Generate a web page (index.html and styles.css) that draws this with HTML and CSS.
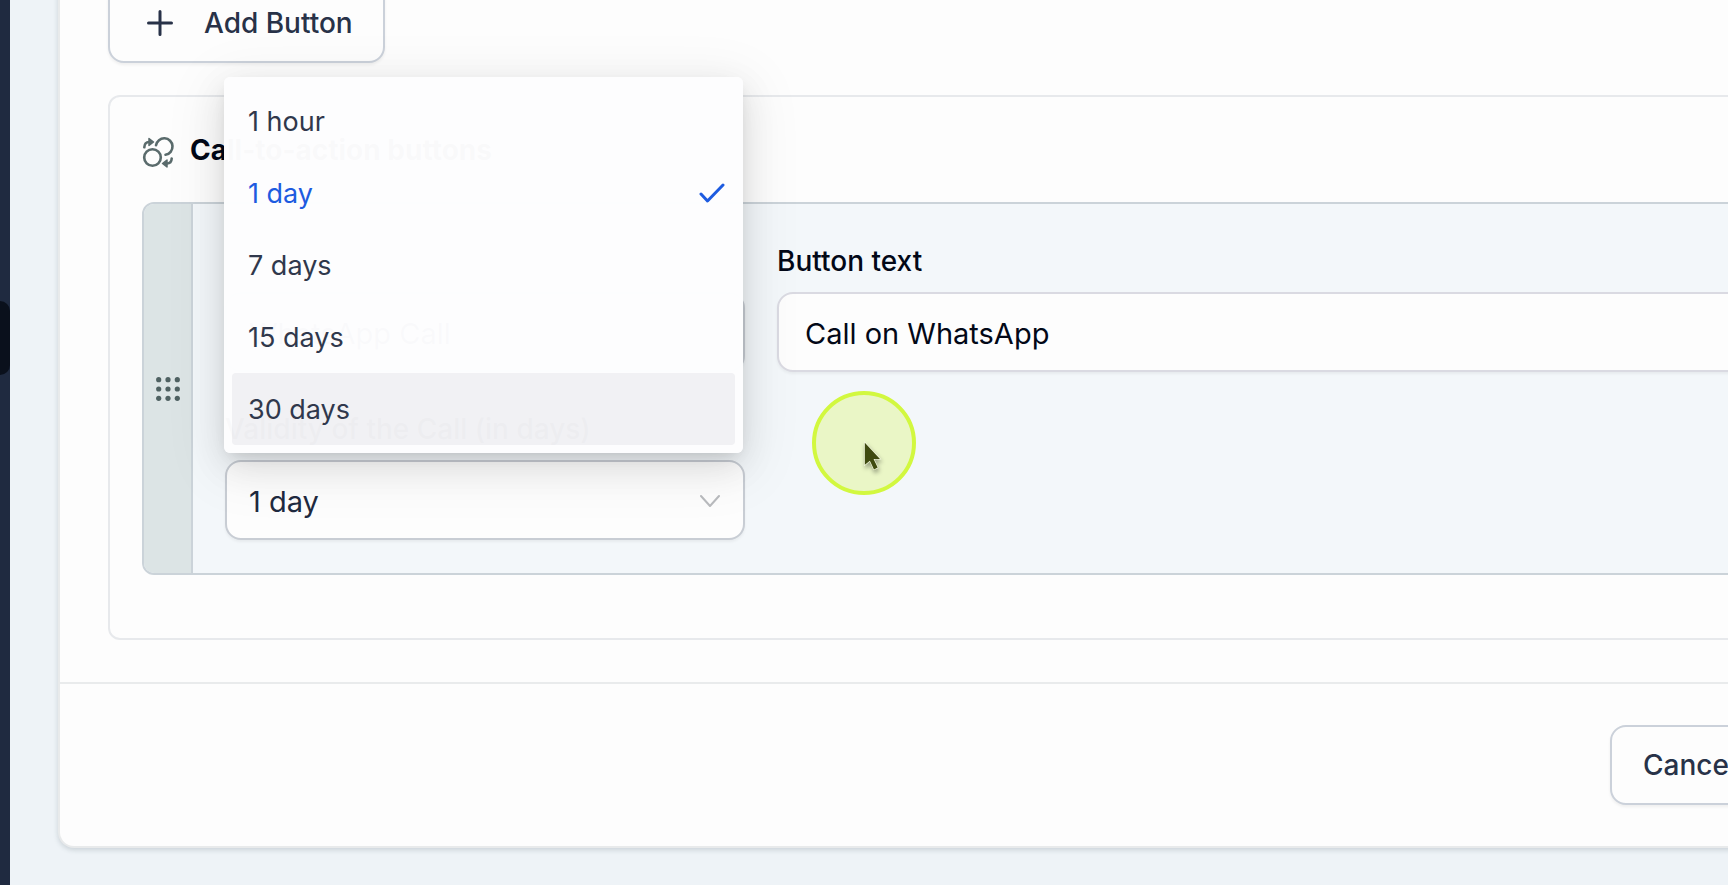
FILE: index.html
```html
<!DOCTYPE html>
<html lang="en">
<head>
    <meta charset="UTF-8">
    <meta name="viewport" content="width=device-width, initial-scale=1.0">
    <title>Call-to-action buttons</title>
    <link rel="stylesheet" href="styles.css">
</head>
<body>
    <aside class="sidebar">
        <div class="sidebar-handle"></div>
    </aside>

    <main class="content">
        <form class="card">
            <div class="card-body">
                <button type="button" class="btn add-btn">
                    <svg width="28" height="28" viewBox="0 0 28 28" fill="none" stroke="currentColor" stroke-width="3" stroke-linecap="round">
                        <path d="M14 2.5v23M2.5 14h23"/>
                    </svg>
                    Add Button
                </button>

                <section class="panel">
                    <h2 class="panel-title">
                        <svg width="32" height="32" viewBox="0 0 32 32" fill="none" stroke="#5a6b6c" stroke-width="2.6" stroke-linecap="round">
                            <circle cx="10.5" cy="21.5" r="8.3"/>
                            <path d="M14 9.3A8.3 8.3 0 1 1 23.5 18.8"/>
                            <path d="M2.3 11.3C2.5 8 4 6 7 6"/>
                            <path d="M29.7 22.5C29.5 26 28 27.5 25 27.5"/>
                            <path d="M7 2.5v7l4.500-3.500zM25 24v7l-4.500-3.500z" fill="#5a6b6c" stroke-width="1.5" stroke-linejoin="round"/>
                        </svg>
                        Call-to-action buttons
                    </h2>

                    <div class="action">
                        <div class="drag">
                            <svg width="24" height="24" viewBox="0 0 24 24" fill="#4f6162">
                                <circle cx="2.7" cy="2.7" r="2.6"/><circle cx="12" cy="2.7" r="2.6"/><circle cx="21.3" cy="2.7" r="2.6"/>
                                <circle cx="2.7" cy="12" r="2.6"/><circle cx="12" cy="12" r="2.6"/><circle cx="21.3" cy="12" r="2.6"/>
                                <circle cx="2.7" cy="21.3" r="2.6"/><circle cx="12" cy="21.3" r="2.6"/><circle cx="21.3" cy="21.3" r="2.6"/>
                            </svg>
                        </div>

                        <div class="fields">
                            <div class="field">
                                <select class="control" aria-label="Type of action">
                                    <option>WhatsApp Call</option>
                                </select>
                            </div>

                            <div class="field">
                                <label for="buttonText">Button text</label>
                                <input type="text" id="buttonText" class="control" value="Call on WhatsApp">
                            </div>

                            <div class="field">
                                <label for="validity">Validity of the Call (in days)</label>
                                <div class="select-wrap">
                                    <select id="validity" class="control">
                                        <option>1 hour</option>
                                        <option selected>1 day</option>
                                        <option>7 days</option>
                                        <option>15 days</option>
                                        <option>30 days</option>
                                    </select>
                                    <svg class="chevron" width="20" height="12" viewBox="0 0 20 12" fill="none" stroke="#b9bbbe" stroke-width="2" stroke-linecap="round" stroke-linejoin="round">
                                        <path d="M1 1l9 10 9-10"/>
                                    </svg>

                                    <!-- Open dropdown list -->
                                    <ul class="menu" role="listbox" aria-label="Validity">
                                        <li role="option">1 hour</li>
                                        <li role="option" class="selected" aria-selected="true">
                                            1 day
                                            <svg width="26" height="20" viewBox="0 0 26 20" fill="none" stroke="currentColor" stroke-width="3" stroke-linecap="round" stroke-linejoin="round">
                                                <path d="M2 11l6.500 7L24 2"/>
                                            </svg>
                                        </li>
                                        <li role="option">7 days</li>
                                        <li role="option">15 days</li>
                                        <li role="option" class="active">30 days</li>
                                    </ul>
                                </div>
                            </div>
                        </div>
                    </div>
                </section>
            </div>

            <div class="card-footer">
                <button type="button" class="btn">Cancel</button>
            </div>
        </form>
    </main>

    <!-- Pointer highlight -->
    <div class="pointer">
        <svg width="22" height="33" viewBox="0 0 24 36">
            <path d="M2 2v24l5.500-4.500 4.500 9.500 4-2-4.500-9.500h7z" fill="#3f4a10" stroke="#f2f8dc" stroke-width="1.500" paint-order="stroke"/>
        </svg>
    </div>
</body>
</html>
```

FILE: styles.css
```css
* {
    margin: 0;
    padding: 0;
    box-sizing: border-box;
}

body {
    display: flex;
    min-height: 100vh;
    overflow: hidden;
    background-color: #eef3f7;
    color: #020817;
    font-family: Inter, "Liberation Sans", sans-serif;
    font-size: 28px;
}

svg {
    display: block;
    flex-shrink: 0;
}

/* Sidebar */
.sidebar {
    display: flex;
    flex-direction: column;
    flex-shrink: 0;
    width: 10px;
    padding-top: 301px;
    background-color: #1f2a40;
}

.sidebar-handle {
    height: 74px;
    background-color: #0a101c;
    border-radius: 0 10px 10px 0;
}

.content {
    flex: 1;
    min-width: 0;
    padding-left: 48px;
}

/* Card, runs past the right edge of the window */
.card {
    margin-right: -160px;
    background-color: #fdfdfd;
    border: 2px solid #e8eaeb;
    border-top: none;
    border-radius: 0 0 16px 16px;
    box-shadow: 0 2px 5px rgba(60, 80, 90, 0.2);
}

.card-body {
    padding: 0 48px 42px;
}

.card-footer {
    display: flex;
    justify-content: flex-end;
    padding: 41px 117px 41px 48px;
    border-top: 2px solid #e9ebec;
}

.btn {
    display: flex;
    align-items: center;
    height: 80px;
    padding: 0 31px;
    background-color: #fdfdfd;
    border: 2px solid #cbd1da;
    border-radius: 16px;
    box-shadow: 0 2px 3px rgba(0, 0, 0, 0.06);
    color: #283248;
    font-family: inherit;
    font-size: 28px;
    font-weight: 500;
    cursor: pointer;
}

.add-btn {
    gap: 30px;
    margin-top: -17px;
    padding: 0 30px 0 36px;
}

/* Panel */
.panel {
    margin-top: 32px;
    padding: 32px 32px 63px;
    border: 2px solid #e7e9ec;
    border-radius: 12px;
}

.panel-title {
    display: flex;
    align-items: center;
    gap: 16px;
    margin-bottom: 31px;
    line-height: 42px;
    font-size: 28px;
    font-weight: 700;
}

.panel-title svg {
    margin-top: 4px;
}

.action {
    display: flex;
    background-color: #f3f7fa;
    border: 2px solid #cbd3d9;
    border-radius: 12px;
}

.drag {
    display: flex;
    align-items: center;
    justify-content: center;
    width: 49px;
    background-color: #dce4e5;
    border-right: 2px solid #cbd3d9;
    border-radius: 10px 0 0 10px;
}

.fields {
    flex: 1;
    display: grid;
    grid-template-columns: 520px 1fr;
    gap: 41px 32px;
    padding: 41px 32px 33px;
}

.field {
    display: flex;
    flex-direction: column;
    justify-content: flex-end;
    gap: 15px;
    min-width: 0;
}

.field label {
    line-height: 32px;
    font-size: 28px;
    font-weight: 500;
}

.control {
    width: 100%;
    height: 80px;
    padding: 2px 26px 0;
    appearance: none;
    background-color: #fdfdfd;
    border: 2px solid #dadae2;
    border-radius: 16px;
    box-shadow: 0 2px 3px rgba(0, 0, 0, 0.05);
    color: #020817;
    font-family: inherit;
    font-size: 29px;
}

select.control {
    padding: 2px 22px 0;
    border-color: #c8cdd4;
    color: #1f2a40;
}

/* Dropdown */
.select-wrap {
    position: relative;
}

.chevron {
    position: absolute;
    top: 35px;
    right: 25px;
}

.menu {
    position: absolute;
    bottom: calc(100% + 7px);
    left: -1px;
    right: 2px;
    padding: 8px;
    list-style: none;
    background-color: rgba(253, 253, 254, 0.985);
    border-radius: 6px;
    box-shadow: 0 12px 34px rgba(0, 0, 0, 0.1),
                0 6px 14px -6px rgba(0, 0, 0, 0.14),
                0 12px 56px 12px rgba(0, 0, 0, 0.06);
}

.menu li {
    display: flex;
    align-items: center;
    justify-content: space-between;
    height: 72px;
    padding: 0 10px 0 16px;
    border-radius: 4px;
    color: #30384c;
    font-size: 27px;
}

.menu .selected {
    color: #1d5be0;
}

.menu .active {
    background-color: rgba(20, 20, 50, 0.05);
}

/* Pointer */
.pointer {
    position: absolute;
    top: 391px;
    left: 812px;
    width: 104px;
    height: 104px;
    padding: 46px 0 0 47px;
    background-color: rgba(220, 245, 120, 0.4);
    border: 4px solid #d2f83f;
    border-radius: 50%;
    pointer-events: none;
}

.pointer svg {
    filter: drop-shadow(1px 3px 2px rgba(0, 0, 0, 0.35));
}
```
